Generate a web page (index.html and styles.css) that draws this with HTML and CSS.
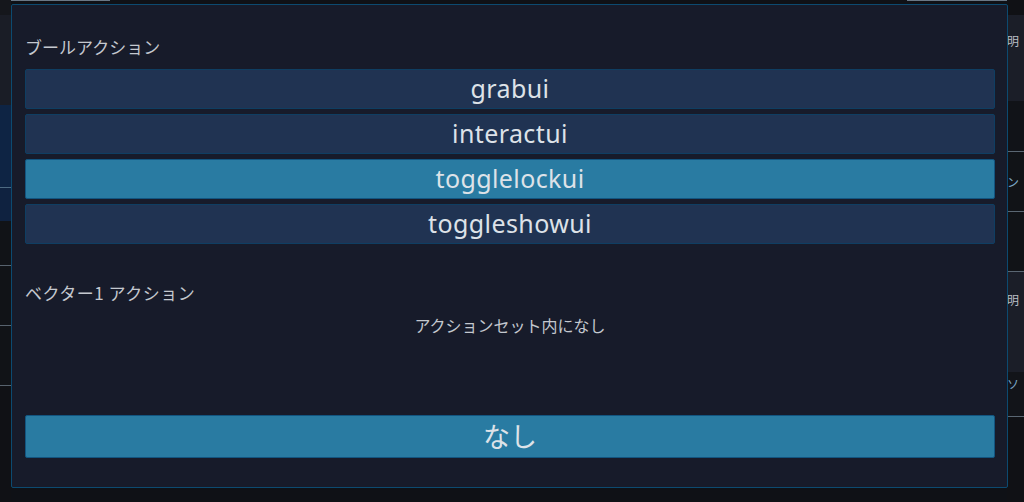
FILE: index.html
```html
<!DOCTYPE html>
<html lang="ja">
<head>
<meta charset="utf-8">
<link rel="stylesheet" href="styles.css">
</head>
<body>
<div class="backdrop">
  <div class="side side-left">
    <div class="blk l1"></div>
    <div class="blk l2"></div>
    <div class="blk l3"></div>
    <div class="blk l4"></div>
    <div class="blk l5"></div>
    <div class="blk l6"></div>
    <div class="blk l7"></div>
    <div class="blk l8"></div>
  </div>
  <div class="center">
    <div class="topline"><span class="tl-a"></span><span class="tl-b"></span></div>
  </div>
  <div class="side side-right">
    <div class="blk r1"></div>
    <div class="blk r2"><span class="ghost">明</span></div>
    <div class="blk r3"></div>
    <div class="blk r4"><span class="ghost blue">ン</span></div>
    <div class="blk r5"></div>
    <div class="blk r6"><span class="ghost">明</span></div>
    <div class="blk r7"><span class="ghost blue">ソ</span></div>
    <div class="blk r8"></div>
  </div>
</div>

<div class="dialog">
  <div class="section-label">ブールアクション</div>
  <div class="btn-list">
    <button class="act">grabui</button>
    <button class="act">interactui</button>
    <button class="act active">togglelockui</button>
    <button class="act">toggleshowui</button>
  </div>
  <div class="section-label second">ベクター1 アクション</div>
  <div class="empty-note">アクションセット内になし</div>
  <button class="act active none">なし</button>
</div>
</body>
</html>
```

FILE: styles.css
```css
* { box-sizing: border-box; }
html, body {
  margin: 0;
  padding: 0;
  width: 1024px;
  height: 502px;
  overflow: hidden;
  background: #0f1014;
  font-family: "Noto Sans", "Noto Sans CJK JP", sans-serif;
}
.backdrop {
  display: flex;
  height: 502px;
}
.side { display: flex; flex-direction: column; }
.side-left { width: 11px; }
.side-right { width: 17px; }
.center { flex: 1; background: #0f1116; }
.topline { display: flex; justify-content: space-between; height: 1px; }
.tl-a { width: 99px; background: #6a7886; }
.tl-b { width: 100px; background: #6a7886; }
.blk { flex: none; position: relative; overflow: hidden; }
.l1 { height: 15px; background: #15171c; }
.l2 { height: 90px; background: #1a1d26; }
.l3 { height: 83px; background: #0e2444; border-bottom: 1px solid #4d6a82; }
.l4 { height: 33px; background: #0f2240; }
.l5 { height: 45px; background: #111317; border-bottom: 1px solid #57626d; }
.l6 { height: 60px; background: #111317; border-bottom: 1px solid #57626d; }
.l7 { height: 60px; background: #111317; border-bottom: 1px solid #57626d; }
.l8 { flex: 1; background: #101115; }
.r1 { height: 15px; background: #101115; }
.r2 { height: 86px; background: #1b1e28; }
.r3 { height: 51px; background: #111318; border-bottom: 1px solid #5a6672; }
.r4 { height: 60px; background: #111317; border-bottom: 1px solid #5a6672; }
.r5 { height: 60px; background: #111317; border-bottom: 1px solid #5a6672; }
.r6 { height: 100px; background: #1b1e28; }
.r7 { height: 45px; background: #121419; border-bottom: 1px solid #5a6672; }
.r8 { flex: 1; background: #101115; }
.ghost {
  position: absolute;
  left: 0;
  top: 18px;
  font-size: 12px;
  line-height: 16px;
  color: #b9bec6;
  font-family: "Noto Sans CJK JP", sans-serif;
}
.r4 .ghost { top: 22px; color: #7aa6c6; }
.r6 .ghost { top: 20px; }
.r7 .ghost { top: 4px; color: #7aa6c6; }

.dialog {
  position: absolute;
  left: 11px;
  top: 4px;
  width: 997px;
  height: 484px;
  background: #171b2a;
  border: 1px solid #0c4a70;
  border-radius: 2px;
  padding: 31px 12px 0 13px;
  display: flex;
  flex-direction: column;
}
.section-label {
  font-family: "Noto Sans CJK JP", sans-serif;
  font-size: 17px;
  line-height: 22px;
  color: #c4c8cf;
  margin-bottom: 11px;
}
.section-label.second {
  margin-top: 38px;
  margin-bottom: 10px;
  letter-spacing: 0.5px;
}
.btn-list {
  display: flex;
  flex-direction: column;
  gap: 5px;
}
.act {
  height: 40px;
  width: 100%;
  border: 1px solid #0f3e62;
  border-radius: 2px;
  background: #203352;
  color: #dde2e8;
  font-family: "Noto Sans", "Noto Sans CJK JP", sans-serif;
  font-size: 25px;
  letter-spacing: 0.4px;
  line-height: 36px;
  padding: 0 0 2px;
  text-align: center;
}
.act.active {
  background: #297ba2;
  border-color: #125580;
}
.empty-note {
  text-align: center;
  font-family: "Noto Sans CJK JP", sans-serif;
  font-size: 16px;
  line-height: 22px;
  color: #c4c8cf;
}
.act.none {
  margin-top: 79px;
  height: 43px;
  font-family: "Noto Sans CJK JP", sans-serif;
  font-size: 27px;
  letter-spacing: 0;
}
```
